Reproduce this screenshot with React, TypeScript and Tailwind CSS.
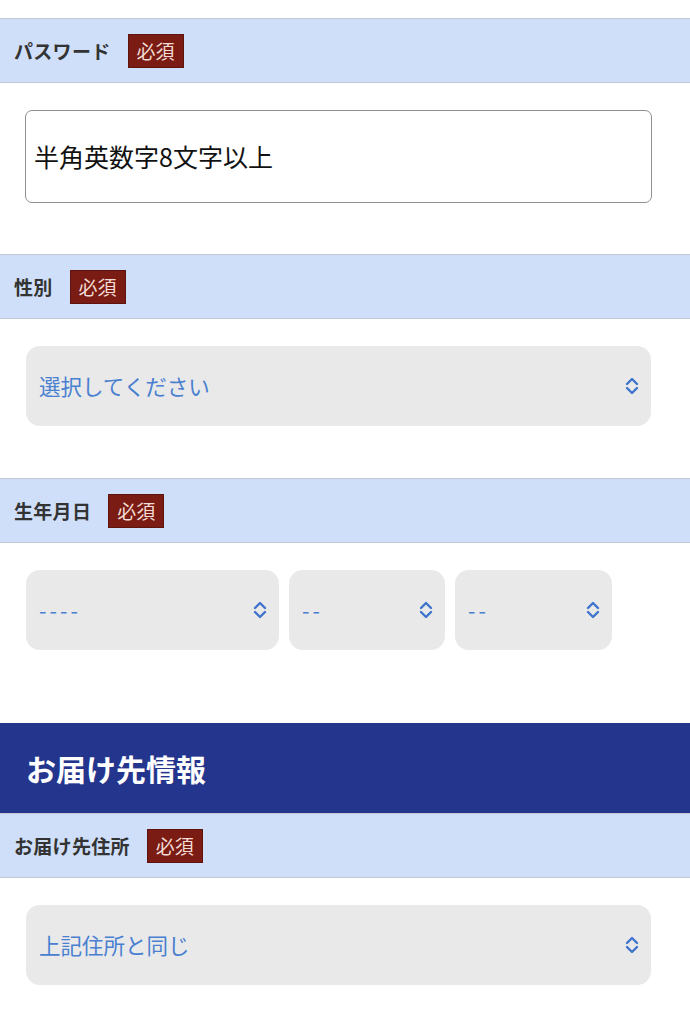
import React from "react";

const FONT = { fontFamily: '"Noto Sans CJK JP", "Noto Sans", sans-serif' };

function Chevron() {
  return (
    <svg width="16" height="20" viewBox="0 0 16 20" fill="none" stroke="#3f74cc" strokeWidth="2.4" strokeLinecap="round" strokeLinejoin="round">
      <path d="M3 8 L8 3 L13 8" />
      <path d="M3 12 L8 17 L13 12" />
    </svg>
  );
}

function Bar({ label }: { label: string }) {
  return (
    <div className="h-[65px] bg-[#cfdff9] border-y border-[#c3c8d2] flex items-center pl-[14px] gap-[17px]">
      <span className="text-[19px] font-bold text-[#333333] leading-none tracking-[0.3px]">{label}</span>
      <span className="bg-[#7a1c13] text-[#f3dcd5] text-[19px] leading-none px-[8px] h-[34px] flex items-center border border-[#5e140d]">必須</span>
    </div>
  );
}

function Select({ text, className, dash }: { text: string; className: string; dash?: boolean }) {
  return (
    <div className={`h-[80px] bg-[#e9e9ea] rounded-[14px] flex items-center justify-between pl-[13px] pr-[11px] ${className}`}>
      <span className={`text-[21.5px] text-[#4a80d0] leading-none ${dash ? "tracking-[3px]" : ""}`}>{text}</span>
      <Chevron />
    </div>
  );
}

export default function App() {
  return (
    <div className="w-[690px] h-[1024px] bg-white overflow-hidden pt-[18px]" style={FONT}>
      <Bar label="パスワード" />
      <div className="pt-[27px] pb-[51px] pl-[25px] pr-[38px]">
        <div className="h-[93px] border-[1.5px] border-[#8f8f8f] rounded-[7px] flex items-center pl-[8px]">
          <span className="text-[25px] text-[#111111] leading-none">半角英数字8文字以上</span>
        </div>
      </div>
      <Bar label="性別" />
      <div className="pt-[27px] pb-[52px] pl-[26px] pr-[39px]">
        <Select text="選択してください" className="w-full" />
      </div>
      <Bar label="生年月日" />
      <div className="pt-[27px] pb-[73px] pl-[26px] flex gap-[10px]">
        <Select text="----" dash className="w-[253px]" />
        <Select text="--" dash className="w-[156px]" />
        <Select text="--" dash className="w-[157px]" />
      </div>
      <div className="h-[90px] bg-[#24358d] flex items-center pl-[26px]">
        <span className="text-[30px] font-bold text-white leading-none">お届け先情報</span>
      </div>
      <Bar label="お届け先住所" />
      <div className="pt-[27px] pl-[26px] pr-[39px]">
        <Select text="上記住所と同じ" className="w-full" />
      </div>
    </div>
  );
}
